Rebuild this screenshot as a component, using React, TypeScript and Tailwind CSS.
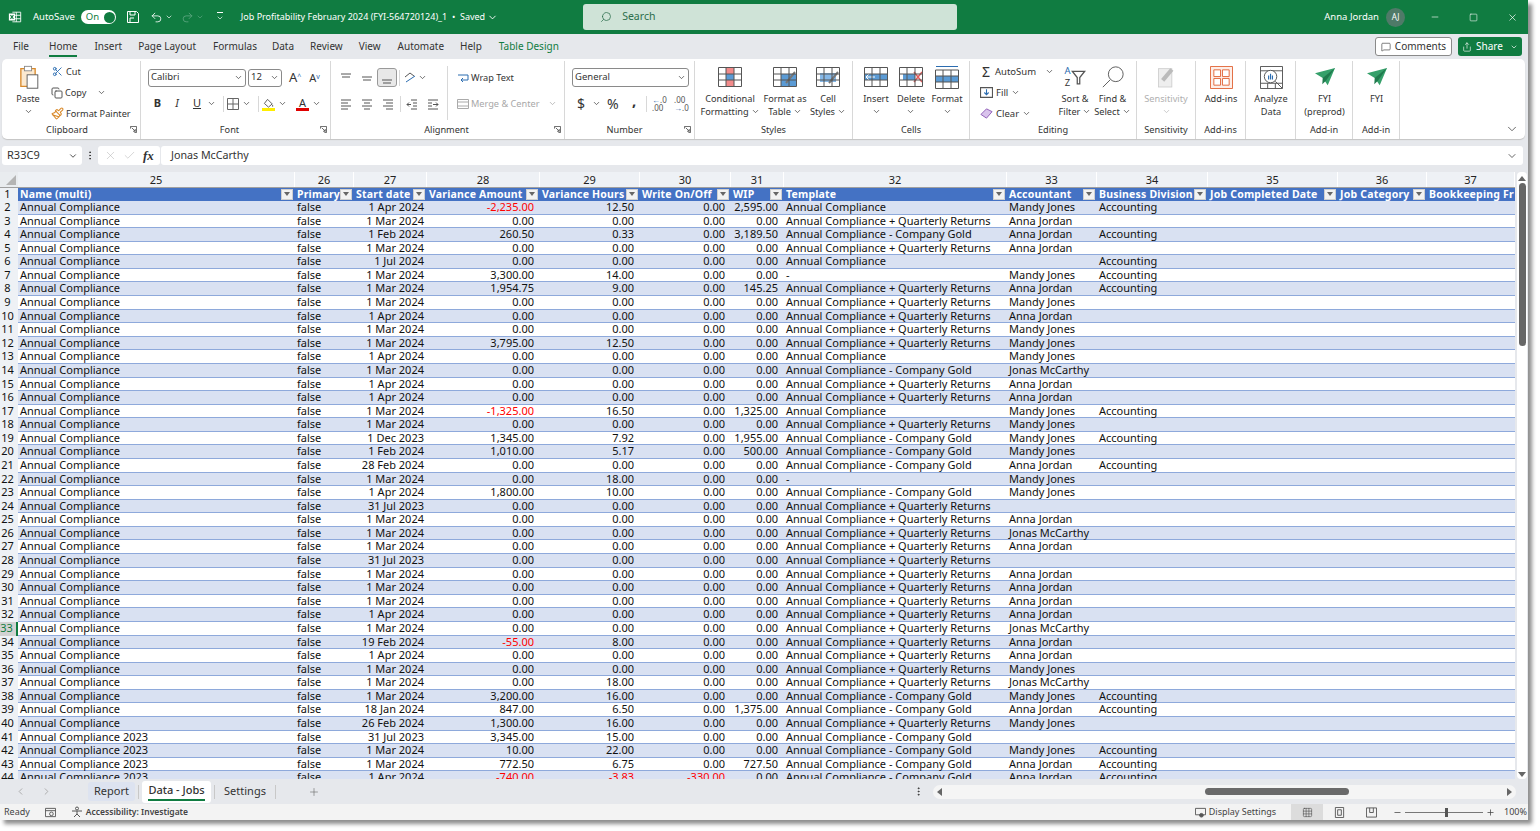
import { ChevronDown, ChevronLeft, ChevronRight, Copy, Minus, MessageSquare, Plus, Redo2, Scissors, Search, Share, Undo2, X, Check, MoreVertical, Paintbrush, Square, Grid3x3 } from "lucide-react";
import type { ReactNode } from "react";

const font = "font-['Noto_Sans','Open_Sans',sans-serif]";

const AC = "Annual Compliance";
const QR = "Annual Compliance + Quarterly Returns";
const CG = "Annual Compliance - Company Gold";
const MJ = "Mandy Jones";
const AJ = "Anna Jordan";
const JM = "Jonas McCarthy";
const ACC = "Accounting";

type Row = [string, string, string, string, string, string, string, string, string];

const z = "0.00";
const rows: Row[] = [
  [AC, "1 Apr 2024", "-2,235.00", "12.50", z, "2,595.00", AC, MJ, ACC],
  [AC, "1 Mar 2024", z, z, z, z, QR, AJ, ""],
  [AC, "1 Feb 2024", "260.50", "0.33", z, "3,189.50", CG, AJ, ACC],
  [AC, "1 Mar 2024", z, z, z, z, QR, AJ, ""],
  [AC, "1 Jul 2024", z, z, z, z, AC, "", ACC],
  [AC, "1 Mar 2024", "3,300.00", "14.00", z, z, "-", MJ, ACC],
  [AC, "1 Mar 2024", "1,954.75", "9.00", z, "145.25", QR, AJ, ACC],
  [AC, "1 Mar 2024", z, z, z, z, QR, MJ, ""],
  [AC, "1 Apr 2024", z, z, z, z, QR, AJ, ""],
  [AC, "1 Mar 2024", z, z, z, z, QR, MJ, ""],
  [AC, "1 Mar 2024", "3,795.00", "12.50", z, z, QR, MJ, ""],
  [AC, "1 Apr 2024", z, z, z, z, AC, MJ, ""],
  [AC, "1 Mar 2024", z, z, z, z, CG, JM, ""],
  [AC, "1 Apr 2024", z, z, z, z, QR, AJ, ""],
  [AC, "1 Apr 2024", z, z, z, z, QR, AJ, ""],
  [AC, "1 Mar 2024", "-1,325.00", "16.50", z, "1,325.00", AC, MJ, ACC],
  [AC, "1 Mar 2024", z, z, z, z, QR, MJ, ""],
  [AC, "1 Dec 2023", "1,345.00", "7.92", z, "1,955.00", CG, MJ, ACC],
  [AC, "1 Feb 2024", "1,010.00", "5.17", z, "500.00", CG, MJ, ""],
  [AC, "28 Feb 2024", z, z, z, z, CG, AJ, ACC],
  [AC, "1 Mar 2024", z, "18.00", z, z, "-", MJ, ""],
  [AC, "1 Apr 2024", "1,800.00", "10.00", z, z, CG, MJ, ""],
  [AC, "31 Jul 2023", z, z, z, z, QR, "", ""],
  [AC, "1 Mar 2024", z, z, z, z, QR, AJ, ""],
  [AC, "1 Mar 2024", z, z, z, z, QR, JM, ""],
  [AC, "1 Mar 2024", z, z, z, z, QR, AJ, ""],
  [AC, "31 Jul 2023", z, z, z, z, QR, "", ""],
  [AC, "1 Mar 2024", z, z, z, z, QR, AJ, ""],
  [AC, "1 Mar 2024", z, z, z, z, QR, AJ, ""],
  [AC, "1 Mar 2024", z, z, z, z, QR, AJ, ""],
  [AC, "1 Apr 2024", z, z, z, z, QR, AJ, ""],
  [AC, "1 Mar 2024", z, z, z, z, QR, JM, ""],
  [AC, "19 Feb 2024", "-55.00", "8.00", z, z, QR, AJ, ""],
  [AC, "1 Apr 2024", z, z, z, z, QR, AJ, ""],
  [AC, "1 Mar 2024", z, z, z, z, QR, MJ, ""],
  [AC, "1 Mar 2024", z, "18.00", z, z, QR, JM, ""],
  [AC, "1 Mar 2024", "3,200.00", "16.00", z, z, CG, MJ, ACC],
  [AC, "18 Jan 2024", "847.00", "6.50", z, "1,375.00", CG, AJ, ACC],
  [AC, "26 Feb 2024", "1,300.00", "16.00", z, z, QR, MJ, ""],
  ["Annual Compliance 2023", "31 Jul 2023", "3,345.00", "15.00", z, z, CG, "", ""],
  ["Annual Compliance 2023", "1 Mar 2024", "10.00", "22.00", z, z, CG, MJ, ACC],
  ["Annual Compliance 2023", "1 Mar 2024", "772.50", "6.75", z, "727.50", CG, AJ, ACC],
  ["Annual Compliance 2023", "1 Apr 2024", "-740.00", "-3.83", "-330.00", z, CG, AJ, ACC],
];

const cols = [
  { n: 25, w: 277, h: "Name (multi)" },
  { n: 26, w: 59, h: "Primary" },
  { n: 27, w: 73, h: "Start date" },
  { n: 28, w: 113, h: "Variance Amount" },
  { n: 29, w: 100, h: "Variance Hours" },
  { n: 30, w: 91, h: "Write On/Off" },
  { n: 31, w: 53, h: "WIP" },
  { n: 32, w: 223, h: "Template" },
  { n: 33, w: 90, h: "Accountant" },
  { n: 34, w: 111, h: "Business Division" },
  { n: 35, w: 130, h: "Job Completed Date" },
  { n: 36, w: 89, h: "Job Category" },
  { n: 37, w: 88, h: "Bookkeeping Fr" },
];

function Chev({ className = "" }: { className?: string }) {
  return <ChevronDown strokeWidth={2} className={`h-[9px] w-[9px] shrink-0 text-[#444] ${className}`} />;
}

function Group({ w, label, labelCls = "", launcher, children }: { w: number; label?: string; labelCls?: string; launcher?: boolean; children: ReactNode }) {
  return (
    <div style={{ width: w }} className="flex h-full shrink-0 flex-col border-r border-[#d8d8d8]">
      <div className="flex h-[62px] items-start">{children}</div>
      <div className={`relative text-center text-[9.2px] leading-[13px] text-[#333] ${labelCls}`}>
        {label}
      </div>
      {launcher && (
        <div className="-mt-[10px] flex justify-end pr-[3px]">
          <svg viewBox="0 0 8 8" className="h-[7px] w-[7px] fill-none stroke-[#555]">
            <path d="M.5 3V.5H7.500V7.500H5M2 2L6 6M6 3.500V6H3.500" />
          </svg>
        </div>
      )}
    </div>
  );
}

function Big({ w, icon, lines, chev, className = "" }: { w: number; icon: ReactNode; lines: ReactNode[]; chev?: boolean; className?: string }) {
  return (
    <div style={{ width: w }} className={`flex shrink-0 flex-col items-center pt-[4px] text-center text-[9.2px] leading-[13px] text-[#333] ${className}`}>
      <div className="flex h-[24px] items-center justify-center">{icon}</div>
      <div className="mt-[3px] flex flex-col items-center">
        {lines.map((l, i) => (
          <span key={i} className="flex items-center gap-[2px] whitespace-nowrap">{l}</span>
        ))}
        {chev && <Chev className="mt-[2px]" />}
      </div>
    </div>
  );
}

function XlLogo() {
  return (
    <svg viewBox="0 0 16 16" className="h-[14px] w-[14px] fill-none stroke-white">
      <path d="M5 2.500H14.500V13.500H5M9.500 2.500V13.500M5 6H14.500M5 10H14.500" />
      <rect x="1" y="4" width="7" height="8" fill="#fff" stroke="none" />
      <path d="M2.800 5.800L6.200 10.200M6.200 5.800L2.800 10.200" stroke="#107c41" strokeWidth="1.200" />
    </svg>
  );
}

function GridIcon({ children }: { children?: ReactNode }) {
  return (
    <svg viewBox="0 0 24 20" className="h-[20px] w-[24px] fill-none">
      {children}
      <path d="M.5.500H23.500V19.500H.5ZM8 .5V19.500M16 .5V19.500M.5 7H23.500M.5 13H23.500" stroke="#555" />
    </svg>
  );
}

function Plane() {
  return (
    <svg viewBox="0 0 24 22" className="h-[20px] w-[24px]">
      <path d="M1 7L23 1L15 20L9.500 12Z" fill="#35a06a" />
      <path d="M23 1L9.500 12L9 19L13 15Z" fill="#1f7a4d" />
    </svg>
  );
}

function AlignIcon({ d }: { d: string }) {
  return (
    <span className="flex h-[19px] w-[21px] items-center justify-center">
      <svg viewBox="0 0 12 12" className="h-[12px] w-[12px] fill-none stroke-[#555]"><path d={d} /></svg>
    </span>
  );
}

function Ribbon() {
  return (
    <div className="ml-[2px] mr-[3px] flex h-[80px] shrink-0 rounded-[5px] bg-white pt-[2px] shadow-[0_1px_1px_#c4c4c4]">
      <Group w={139} label="Clipboard" labelCls="pr-[8px]" launcher>
        <Big
          w={46}
          className="ml-[3px]"
          lines={["Paste"]}
          chev
          icon={
            <svg viewBox="0 0 24 28" className="h-[25px] w-[22px] fill-none">
              <path d="M4 4H20V24H4Z" fill="#fbe9d0" stroke="#d98a2b" strokeWidth="1.500" />
              <rect x="8" y="1.500" width="8" height="5" fill="#fff" stroke="#888" />
              <rect x="11" y="11" width="12" height="15" fill="#fff" stroke="#555" />
            </svg>
          }
        />
        <div className="flex flex-col gap-[4px] pt-[2px] text-[9.2px] leading-[17px] text-[#333]">
          <span className="flex items-center gap-[3px] pl-px"><Scissors className="h-[11px] w-[11px] text-[#2b6cb0]" />Cut</span>
          <span className="flex items-center gap-[2px]"><Copy className="h-[12px] w-[12px] text-[#555]" />Copy<Chev className="ml-[8px]" /></span>
          <span className="flex items-center gap-[2px]"><Paintbrush className="h-[13px] w-[13px] text-[#d98a2b]" />Format Painter</span>
        </div>
      </Group>
      <Group w={190} label="Font" labelCls="pr-[12px]" launcher>
        <div className="flex flex-col pl-[7px] pt-[7px]">
          <div className="flex h-[19px] items-center gap-[2px]">
            <div className="flex h-[18px] w-[98px] items-center justify-between rounded-[3px] border border-[#8a8a8a] px-[2px] text-[9.500px] text-[#333]">Calibri<Chev /></div>
            <div className="flex h-[18px] w-[34px] items-center justify-between rounded-[3px] border border-[#8a8a8a] px-[2px] text-[9.500px] text-[#333]">12<Chev /></div>
            <span className="ml-[5px] text-[13px] leading-none text-[#333]">A<sup className="text-[7px] text-[#2b6cb0]">^</sup></span>
            <span className="ml-[6px] text-[11px] leading-none text-[#333]">A<sup className="text-[7px] text-[#2b6cb0]">v</sup></span>
          </div>
          <div className="mt-[7px] flex h-[19px] items-center text-[11px] text-[#333]">
            <span className="w-[19px] text-center font-bold">B</span>
            <span className="w-[20px] text-center italic">I</span>
            <span className="w-[20px] text-center underline">U</span>
            <Chev className="mr-[7px]" />
            <span className="mr-[3px] h-[16px] border-l border-[#d8d8d8]" />
            <svg viewBox="0 0 12 12" className="h-[12px] w-[12px] fill-none stroke-[#666]"><path d="M.5.500H11.500V11.500H.5ZM6 .5V11.500M.5 6H11.500" /></svg>
            <Chev className="ml-[3px] mr-[7px]" />
            <span className="mr-[3px] h-[16px] border-l border-[#d8d8d8]" />
            <span className="flex h-[14px] w-[13px] flex-col items-center justify-end">
              <svg viewBox="0 0 12 10" className="h-[10px] w-[11px] fill-none stroke-[#555]"><path d="M5 1L10 6L6 9.500L1.500 5.500ZM10.500 7V9" /></svg>
              <span className="h-[3px] w-[13px] bg-[#ffee00]" />
            </span>
            <Chev className="ml-[3px] mr-[9px]" />
            <span className="flex h-[14px] w-[13px] flex-col items-center justify-end text-[11px] leading-[11px]">
              A
              <span className="h-[3px] w-[13px] bg-[#e00000]" />
            </span>
            <Chev className="ml-[3px]" />
          </div>
        </div>
      </Group>
      <Group w={234} label="Alignment" labelCls="pr-[2px]" launcher>
        <div className="flex w-[116px] shrink-0 flex-col pl-[4px] pt-[7px]">
          <div className="flex h-[19px] items-center">
            <AlignIcon d="M1 2H11M2 5H10" />
            <AlignIcon d="M1 5H11M2 8H10" />
            <span className="flex h-[19px] w-[20px] items-center justify-center rounded-[3px] border border-[#999] bg-[#e8e8e8]">
              <svg viewBox="0 0 12 12" className="h-[12px] w-[12px] fill-none stroke-[#555]"><path d="M1 8H11M2 11H10" /></svg>
            </span>
            <span className="ml-[2px] h-[16px] border-l border-[#d8d8d8]" />
            <svg viewBox="0 0 14 14" className="ml-[3px] h-[14px] w-[14px] fill-none stroke-[#555]"><path d="M2 6L7 2L11 5" /><path d="M3 11L12 5" stroke="#2b6cb0" /></svg>
            <Chev className="ml-px" />
          </div>
          <div className="mt-[7px] flex h-[19px] items-center">
            <AlignIcon d="M1 2H11M1 5H8M1 8H11M1 11H8" />
            <AlignIcon d="M1 2H11M3 5H9M1 8H11M3 11H9" />
            <AlignIcon d="M1 2H11M4 5H11M1 8H11M4 11H11" />
            <span className="ml-[2px] h-[16px] border-l border-[#d8d8d8]" />
            <AlignIcon d="M5 2H11M7 5H11M7 8H11M5 11H11M1 6.500H5M3 4.500L1 6.500L3 8.500" />
            <AlignIcon d="M1 2H11M1 5H5M1 8H5M1 11H11M6 6.500H11M9 4.500L11 6.500L9 8.500" />
          </div>
        </div>
        <span className="mt-[5px] h-[54px] border-l border-[#d8d8d8]" />
        <div className="flex flex-col pl-[9px] pt-[7px] text-[9.200px]">
          <span className="flex h-[19px] items-center gap-[2px] text-[#333]">
            <svg viewBox="0 0 12 12" className="h-[12px] w-[12px] fill-none stroke-[#2b6cb0]"><path d="M1 3H11V8H5M6 6L4 8L6 10" /></svg>
            Wrap Text
          </span>
          <span className="mt-[7px] flex h-[19px] items-center gap-[2px] text-[#a8a8a8]">
            <svg viewBox="0 0 12 12" className="h-[12px] w-[12px] fill-none stroke-[#aaa]"><path d="M.5 1.500H11.500V10.500H.5ZM.5 4H11.500M.5 8H11.500" /></svg>
            Merge &amp; Center
            <Chev className="ml-[6px] text-[#aaa]" />
          </span>
        </div>
      </Group>
      <Group w={130} label="Number" labelCls="pr-[10px]" launcher>
        <div className="flex flex-col pl-[7px] pt-[7px]">
          <div className="flex h-[19px] w-[117px] items-center justify-between rounded-[3px] border border-[#8a8a8a] px-[2px] text-[9.500px] text-[#333]">General<Chev /></div>
          <div className="mt-[7px] flex h-[19px] items-center text-[#333]">
            <span className="ml-[5px] w-[8px] text-[14px] leading-none">$</span>
            <Chev className="ml-[7px]" />
            <span className="ml-[6px] w-[14px] text-[14px] leading-none">%</span>
            <span className="ml-[11px] w-[6px] -translate-y-[3px] text-[15px] font-bold leading-none">,</span>
            <span className="ml-[8px] h-[16px] border-l border-[#d8d8d8]" />
            <span className="ml-[5px] w-[12px] whitespace-nowrap text-[8px] leading-[8px] text-[#555]"><span className="text-[#2b6cb0]">←</span>.0<br />.00</span>
            <span className="ml-[10px] w-[12px] whitespace-nowrap text-[8px] leading-[8px] text-[#555]">.00<br /><span className="text-[#2b6cb0]">→</span>.0</span>
          </div>
        </div>
      </Group>
      <Group w={158} label="Styles">
        <Big
          w={64}
          className="ml-[3px]"
          lines={["Conditional", <>Formatting <Chev /></>]}
          icon={
            <GridIcon>
              <rect x="8" y="0" width="8" height="7" fill="#f28b8b" />
              <rect x="8" y="7" width="8" height="6" fill="#5b9bd5" />
              <rect x="8" y="13" width="8" height="7" fill="#f28b8b" />
            </GridIcon>
          }
        />
        <Big
          w={46}
          lines={["Format as", <>Table <Chev /></>]}
          icon={
            <GridIcon>
              <rect x="8" y="7" width="15" height="12" fill="#5b9bd5" />
              <path d="M22 5L13 16" stroke="#777" strokeWidth="2" />
            </GridIcon>
          }
        />
        <Big
          w={40}
          lines={["Cell", <>Styles <Chev /></>]}
          icon={
            <GridIcon>
              <rect x="4" y="6" width="16" height="9" fill="#85b8e8" />
              <path d="M22 5L13 16" stroke="#777" strokeWidth="2" />
            </GridIcon>
          }
        />
      </Group>
      <Group w={117} label="Cells">
        <Big
          w={38}
          className="ml-[4px]"
          lines={["Insert"]}
          chev
          icon={
            <GridIcon>
              <rect x="0" y="7" width="24" height="6" fill="#5b9bd5" />
              <path d="M11 10H2M5 7L2 10L5 13" stroke="#fff" />
            </GridIcon>
          }
        />
        <Big
          w={32}
          lines={["Delete"]}
          chev
          icon={
            <GridIcon>
              <rect x="4" y="7" width="12" height="6" fill="#5b9bd5" />
              <path d="M15 5L23 15M23 5L15 15" stroke="#e05a5a" strokeWidth="1.500" />
            </GridIcon>
          }
        />
        <Big
          w={40}
          lines={["Format"]}
          chev
          icon={
            <svg viewBox="0 0 24 24" className="h-[24px] w-[24px] fill-none">
              <rect x="1" y="11" width="22" height="6" fill="#5b9bd5" />
              <path d="M.5 5H23.500V23.500H.5ZM8 5V23.500M16 5V23.500M.5 11H23.500M.5 17H23.500" stroke="#555" />
              <path d="M1 1.500H23" stroke="#2b6cb0" />
            </svg>
          }
        />
      </Group>
      <Group w={167} label="Editing">
        <div className="flex w-[86px] shrink-0 flex-col gap-[4px] pt-[2px] text-[9.500px] leading-[17px] text-[#333]">
          <span className="flex items-center gap-[3px] pl-[10px]"><span className="w-[12px] text-center text-[14px] leading-none">Σ</span>AutoSum<Chev className="ml-[6px]" /></span>
          <span className="flex items-center gap-[3px] pl-[10px]">
            <svg viewBox="0 0 12 12" className="h-[13px] w-[13px] fill-none stroke-[#555]"><path d="M.5 1.500H11.500V10.500H.5Z" /><path d="M6 3V8M4 6L6 8L8 6" stroke="#2b6cb0" /></svg>
            Fill<Chev />
          </span>
          <span className="flex items-center gap-[3px] pl-[10px]">
            <svg viewBox="0 0 14 12" className="h-[13px] w-[13px] fill-[#d9c3ec] stroke-[#8e5bb5]"><path d="M1 7L7 1L13 4L7 11Z" /></svg>
            Clear<Chev />
          </span>
        </div>
        <Big
          w={38}
          lines={["Sort &", <>Filter <Chev /></>]}
          icon={
            <span className="flex items-center">
              <span className="flex flex-col text-[9.500px] leading-[12px] text-[#333]"><span className="text-[#2b6cb0]">A</span><span>Z</span></span>
              <svg viewBox="0 0 12 12" className="h-[15px] w-[15px] fill-none stroke-[#555]"><path d="M1 1H11L7 6V11H5V6Z" /></svg>
            </span>
          }
        />
        <Big
          w={37}
          lines={["Find &", <>Select <Chev /></>]}
          icon={
            <svg viewBox="0 0 26 26" className="h-[24px] w-[24px] fill-none stroke-[#555]"><circle cx="16" cy="10" r="8" /><path d="M10 16L2 24" /></svg>
          }
        />
      </Group>
      <Group w={59} label="Sensitivity">
        <div className="flex w-full flex-col items-center pt-[4px] text-[9.200px] leading-[13px] text-[#b0b0b0]">
          <svg viewBox="0 0 24 28" className="h-[24px] w-[20px]">
            <rect x="3" y="4" width="16" height="22" fill="#eee" stroke="#ccc" />
            <path d="M8 18L19 5" stroke="#bbb" strokeWidth="5" />
          </svg>
          <span className="mt-[3px]">Sensitivity</span>
          <Chev className="mt-[2px] text-[#bbb]" />
        </div>
      </Group>
      <Group w={50} label="Add-ins">
        <Big
          w={50}
          lines={["Add-ins"]}
          icon={
            <svg viewBox="0 0 24 24" className="h-[23px] w-[23px] fill-none stroke-[#e2683c]">
              <path d="M.5.500H23.500V23.500H.5Z" fill="#fdeee8" />
              <path d="M4 4H11V11H4ZM13 4H20V11H13ZM4 13H11V20H4ZM13 13H20V20H13Z" fill="#fff" />
            </svg>
          }
        />
      </Group>
      <Group w={50}>
        <Big
          w={50}
          lines={["Analyze", "Data"]}
          icon={
            <svg viewBox="0 0 24 24" className="h-[23px] w-[23px] fill-none stroke-[#555]">
              <path d="M.5.500H23.500V23.500H.5ZM.5 5H23.500M.5 18H23.500M8 18V23.500M16 18V23.500" />
              <circle cx="11" cy="11" r="6.500" fill="#fff" />
              <path d="M9 14V10M11 14V8M13 14V10" stroke="#2b6cb0" strokeWidth="1.200" />
              <path d="M16 16L23 23" />
            </svg>
          }
        />
      </Group>
      <Group w={57} label="Add-in">
        <Big w={57} lines={["FYI", "(preprod)"]} icon={<Plane />} />
      </Group>
      <Group w={47} label="Add-in">
        <Big w={47} lines={["FYI"]} icon={<Plane />} />
      </Group>
      <div className="flex flex-1 items-end justify-end pb-[3px] pr-[6px]">
        <ChevronDown className="h-[14px] w-[14px] text-[#555]" strokeWidth={1.5} />
      </div>
    </div>
  );
}

function FilterBtn() {
  return (
    <span className="flex h-[11px] w-[12px] shrink-0 items-center justify-center border border-[#cfcfcf] bg-[#f2f2f2]">
      <span className="h-0 w-0 border-x-[3px] border-t-[4px] border-x-transparent border-t-[#666]" />
    </span>
  );
}

function Cell({ w, pad = "", red, children }: { w: number; pad?: string; red?: boolean; children: ReactNode }) {
  return (
    <div style={{ width: w }} className={`shrink-0 whitespace-nowrap pl-[2px] ${pad} ${red ? "text-[#ff0000]" : ""}`}>
      {children}
    </div>
  );
}

function Sheet() {
  const num = "pr-[6px] text-right";
  return (
    <div className="flex min-h-0 flex-1">
      <div className="min-w-0 flex-1 overflow-hidden bg-white text-[11px] text-[#111]">
        <div className="flex h-[15px]">
          <div className="flex w-[18px] shrink-0 items-end justify-end bg-[#e9ecef] p-[2px]">
            <span className="h-0 w-0 border-b-[10px] border-l-[10px] border-b-[#b4b4b4] border-l-transparent" />
          </div>
          {cols.map((c) => (
            <div key={c.n} style={{ width: c.w }} className="shrink-0 border-r border-white bg-[#eef1f5] text-center leading-[15px] text-[#222]">{c.n}</div>
          ))}
        </div>
        <div className="flex h-[14px] border-t border-[#a0a0a0]">
          <div className="w-[18px] shrink-0 bg-[#eef1f5] pr-[3px] text-center leading-[12px]">1</div>
          {cols.map((c) => (
            <div key={c.n} style={{ width: c.w }} className="flex shrink-0 items-center justify-between bg-[#4472c4] px-[2px] pb-px text-[10.500px] font-bold leading-[12px] tracking-[0.2px] text-white">
              <span className="whitespace-nowrap">{c.h}</span>
              {c.n !== 37 && <FilterBtn />}
            </div>
          ))}
        </div>
        {rows.map((r, i) => {
          const no = i + 2;
          const active = no === 33;
          return (
            <div key={no} className="flex h-[13.590px] leading-[12.5px]">
              <div className={`w-[18px] shrink-0 pr-[3px] text-center ${active ? "border-r-2 border-[#107c41] bg-[#d2d2d2] text-[#107c41]" : "bg-[#eef1f5]"}`}>{no}</div>
              <div className={`flex flex-1 border-b border-[#8ea9db] ${i % 2 === 0 ? "bg-[#d9e1f2]" : "bg-white"}`}>
                <Cell w={277}>{r[0]}</Cell>
                <Cell w={59}>false</Cell>
                <Cell w={73} pad="pr-[3px] text-right">{r[1]}</Cell>
                <Cell w={113} pad={num} red={r[2].startsWith("-")}>{r[2]}</Cell>
                <Cell w={100} pad={num} red={r[3].startsWith("-")}>{r[3]}</Cell>
                <Cell w={91} pad={num} red={r[4].startsWith("-")}>{r[4]}</Cell>
                <Cell w={53} pad={num}>{r[5]}</Cell>
                <Cell w={223}>{r[6]}</Cell>
                <Cell w={90}>{r[7]}</Cell>
                <Cell w={111}>{r[8]}</Cell>
              </div>
            </div>
          );
        })}
      </div>
      <div className="ml-[2px] mr-px flex w-[10px] shrink-0 flex-col items-center rounded-[4px] bg-white">
        <span className="mt-[4px] h-0 w-0 border-x-[4px] border-b-[5px] border-x-transparent border-b-[#666]" />
        <span className="mt-[2px] h-[163px] w-[7px] rounded-full bg-[#666]" />
        <span className="mb-[2px] mt-auto h-0 w-0 border-x-[4px] border-t-[5px] border-x-transparent border-t-[#666]" />
      </div>
    </div>
  );
}

export default function App() {
  return (
    <div className={`h-[831px] w-[1540px] overflow-hidden bg-white ${font}`}>
      <div className="flex h-[820px] w-[1528px] flex-col bg-[#e6e8ec] shadow-[4px_4px_4px_#8f8f8f]">
        <div className="flex h-[34px] shrink-0 items-center bg-[#107c41] text-[9.500px] text-white">
          <div className="ml-[8px] w-[25px]"><XlLogo /></div>
          <span>AutoSave</span>
          <div className="ml-[6px] flex h-[14px] w-[35px] items-center justify-between rounded-full bg-white pl-[5px] pr-px text-[9.500px] leading-none text-[#107c41]">
            On<span className="h-[11px] w-[11px] rounded-full bg-[#107c41]" />
          </div>
          <svg viewBox="0 0 14 14" className="ml-[10px] h-[14px] w-[14px] fill-none stroke-white">
            <path d="M1.500 1.500H10.500L12.500 3.500V12.500H1.500ZM4 1.500V5H9V1.500M4 12.500V8H8" />
          </svg>
          <Undo2 className="ml-[10px] h-[13px] w-[13px]" strokeWidth={1.5} />
          <ChevronDown className="ml-[2px] h-[8px] w-[8px]" />
          <Redo2 className="ml-[8px] h-[13px] w-[13px] text-[#5fa883]" strokeWidth={1.5} />
          <ChevronDown className="ml-[2px] h-[8px] w-[8px] text-[#5fa883]" />
          <span className="ml-[12px] flex flex-col items-center">
            <span className="mb-px h-px w-[6px] bg-white" />
            <ChevronDown className="h-[8px] w-[8px]" />
          </span>
          <span className="ml-[17px] whitespace-nowrap text-[9px]">Job Profitability February 2024 (FYI-564720124)_1 &nbsp;•&nbsp; Saved</span>
          <ChevronDown className="ml-[2px] h-[11px] w-[11px]" />
          <div className="ml-[85px] flex h-[26px] w-[374px] items-center rounded-[3px] bg-[#cfe3d7] pl-[17px] text-[10.500px] text-[#2c6e4c]">
            <Search className="h-[12px] w-[12px] -scale-x-100" strokeWidth={1.5} />
            <span className="ml-[10px]">Search</span>
          </div>
          <span className="ml-auto">Anna Jordan</span>
          <span className="ml-[7px] flex h-[19px] w-[19px] items-center justify-center rounded-full bg-[#4f7a68] text-[8px]">AJ</span>
          <Minus className="ml-[25px] h-[10px] w-[10px]" strokeWidth={1.5} />
          <Square className="ml-[29px] h-[9px] w-[9px]" strokeWidth={1.5} />
          <X className="ml-[29px] mr-[10px] h-[11px] w-[11px]" strokeWidth={1.5} />
        </div>

        <div className="flex h-[25px] shrink-0 items-center text-[10px] text-[#333]">
          <span className="ml-[13px]">File</span>
          <span className="relative ml-[20px]">Home<span className="absolute inset-x-0 -bottom-[3px] h-[2px] bg-[#107c41]" /></span>
          <span className="ml-[17px]">Insert</span>
          <span className="ml-[16px]">Page Layout</span>
          <span className="ml-[17px]">Formulas</span>
          <span className="ml-[15px]">Data</span>
          <span className="ml-[16px]">Review</span>
          <span className="ml-[16px]">View</span>
          <span className="ml-[17px]">Automate</span>
          <span className="ml-[16px]">Help</span>
          <span className="ml-[17px] text-[#107c41]">Table Design</span>
          <div className="ml-auto flex h-[19px] w-[77px] items-center justify-center gap-[4px] rounded-[3px] border border-[#8a8a8a] bg-white">
            <MessageSquare className="h-[10px] w-[10px]" strokeWidth={1.5} />Comments
          </div>
          <div className="ml-[6px] mr-[6px] flex h-[19px] w-[64px] items-center justify-center gap-[4px] rounded-[3px] bg-[#107c41] text-white">
            <Share className="h-[10px] w-[10px]" strokeWidth={1.5} />Share<ChevronDown className="ml-[3px] h-[8px] w-[8px]" />
          </div>
        </div>

        <Ribbon />

        <div className="mt-[7px] flex h-[19px] shrink-0 items-center text-[11px] text-[#333]">
          <div className="ml-[2px] flex h-full w-[80px] items-center justify-between rounded-[3px] bg-white pl-[5px] pr-[4px]">R33C9<ChevronDown className="h-[10px] w-[10px]" /></div>
          <MoreVertical className="mx-px h-[11px] w-[14px]" strokeWidth={2} />
          <div className="flex h-full w-[62px] items-center gap-[6px] rounded-[3px] bg-white pl-[6px]">
            <X className="h-[13px] w-[13px] text-[#b4b4b4]" strokeWidth={1} />
            <Check className="h-[13px] w-[13px] text-[#b4b4b4]" strokeWidth={1} />
            <span className="ml-px font-['Liberation_Serif',serif] text-[13px] font-bold italic">fx</span>
          </div>
          <div className="ml-px mr-[5px] flex h-full flex-1 items-center justify-between rounded-[3px] bg-white pl-[10px] pr-[5px] text-[10.700px]">
            Jonas McCarthy<ChevronDown className="h-[12px] w-[12px]" strokeWidth={1.5} />
          </div>
        </div>

        <div className="mt-[7px] flex min-h-0 flex-1 flex-col">
          <Sheet />
          <div className="flex h-[25px] shrink-0 items-center text-[11px] text-[#333]">
            <ChevronLeft className="ml-[15px] h-[11px] w-[11px] text-[#a8a8a8]" />
            <ChevronRight className="ml-[15px] h-[11px] w-[11px] text-[#a8a8a8]" />
            <span className="ml-[36px] flex h-[19px] w-[47px] items-center justify-center rounded-[3px] bg-[#dde3f0]">Report</span>
            <span className="ml-[3px] h-[14px] border-l border-[#c8c8c8]" />
            <span className="relative ml-[3px] flex h-[22px] w-[69px] items-center justify-center rounded-[3px] bg-white pb-[3px] font-medium">
              Data - Jobs
              <span className="absolute inset-x-[6px] bottom-[2px] h-[2px] bg-[#107c41]" />
            </span>
            <span className="ml-[3px] h-[14px] border-l border-[#c8c8c8]" />
            <span className="w-[60px] text-center">Settings</span>
            <span className="h-[14px] border-l border-[#c8c8c8]" />
            <Plus className="ml-[32px] h-[12px] w-[12px] text-[#666]" strokeWidth={1.2} />
            <MoreVertical className="ml-[593px] h-[11px] w-[11px]" />
            <div className="ml-[9px] mr-[12px] flex h-[14px] flex-1 items-center rounded-full bg-[#f5f5f5] px-[4px]">
              <span className="h-0 w-0 border-y-[4px] border-r-[5px] border-y-transparent border-r-[#666]" />
              <span className="ml-[263px] h-[7px] w-[144px] rounded-full bg-[#6a6a6a]" />
              <span className="ml-auto h-0 w-0 border-y-[4px] border-l-[5px] border-y-transparent border-l-[#666]" />
            </div>
          </div>
          <div className="flex h-[16px] shrink-0 items-center bg-[#f3f3f3] text-[9px] text-[#444]">
            <span className="ml-[4px]">Ready</span>
            <svg viewBox="0 0 12 12" className="ml-[15px] h-[11px] w-[11px] fill-none stroke-[#555]"><path d="M.5 1.500H11.500V10.500H.5ZM.5 4H11.500" /><circle cx="7" cy="7.500" r="2" /></svg>
            <svg viewBox="0 0 12 12" className="ml-[15px] h-[12px] w-[12px] fill-none stroke-[#555]"><circle cx="6" cy="2.500" r="1.500" /><path d="M1 5H11M6 5V8M3 11L6 8L9 11" /></svg>
            <span className="ml-[3px] text-[8.500px] font-semibold">Accessibility: Investigate</span>
            <span className="ml-auto flex items-center gap-[3px]">
              <svg viewBox="0 0 12 12" className="h-[11px] w-[11px] fill-none stroke-[#555]"><path d="M.5 1.500H11.500V8.500H.5Z" /><circle cx="7" cy="9" r="2" fill="#555" /></svg>
              Display Settings
            </span>
            <span className="ml-[15px] flex h-full w-[32px] items-center justify-center bg-[#dcdcdc]"><Grid3x3 className="h-[11px] w-[11px]" strokeWidth={1.2} /></span>
            <span className="ml-[9px] flex w-[14px] justify-center">
              <svg viewBox="0 0 12 12" className="h-[11px] w-[11px] fill-none stroke-[#555]"><path d="M1.500.500H10.500V11.500H1.500ZM4 3H8V9H4Z" /></svg>
            </span>
            <span className="ml-[18px] flex w-[14px] justify-center">
              <svg viewBox="0 0 12 12" className="h-[11px] w-[11px] fill-none stroke-[#555]"><path d="M.5 1H11.500V11H.5ZM4 1V6H8V1" /></svg>
            </span>
            <Minus className="ml-[15px] h-[9px] w-[9px]" />
            <span className="ml-[3px] flex h-px w-[78px] items-center bg-[#777]"><span className="ml-[40px] h-[9px] w-[3px] bg-[#555]" /></span>
            <Plus className="ml-[3px] h-[9px] w-[9px]" />
            <span className="ml-[9px] mr-px">100%</span>
          </div>
        </div>
      </div>
    </div>
  );
}
